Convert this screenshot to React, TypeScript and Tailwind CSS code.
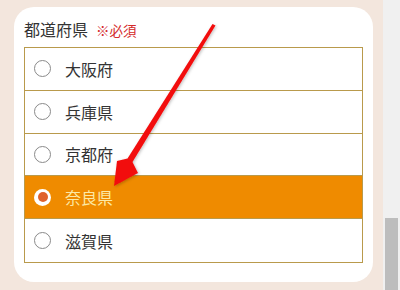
import React from "react";

const items = ["大阪府", "兵庫県", "京都府", "奈良県", "滋賀県"];
const selected = 3;

export default function App() {
  return (
    <div
      className="relative flex w-[400px] h-[290px] overflow-hidden"
      style={{ fontFamily: '"Noto Sans CJK JP", "Noto Sans", sans-serif' }}
    >
      <div className="w-[383px] h-full bg-[#f3e6dd] pt-[7px] pl-[14px]">
        <div className="w-[359px] h-[275px] rounded-[20px] bg-white px-[10px] pt-[12px]">
          <div className="flex items-baseline h-[20px] leading-[20px] mb-[8px]">
            <span className="text-[16px] text-[#333333]">都道府県</span>
            <span className="ml-[8px] text-[13.5px] text-[#d42a2a]">※必須</span>
          </div>
          <div className="border border-[#b99a4c] w-[339px]">
            {items.map((name, i) => {
              const sel = i === selected;
              return (
                <div
                  key={name}
                  className={
                    "flex items-center h-[42.8px] pl-[9px] " +
                    (i < items.length - 1 ? "border-b border-[#b99a4c] " : "") +
                    (sel ? "bg-[#ef8b00]" : "bg-white")
                  }
                >
                  {sel ? (
                    <span className="flex items-center justify-center w-[17px] h-[17px] rounded-full bg-white">
                      <span className="w-[10px] h-[10px] rounded-full bg-[#e0622c]" />
                    </span>
                  ) : (
                    <span className="w-[17px] h-[17px] rounded-full border border-[#8a8a8a] bg-white" />
                  )}
                  <span
                    className={
                      "ml-[14px] text-[16px] leading-[20px] " +
                      (sel ? "text-[#fce9a6]" : "text-[#333333]")
                    }
                  >
                    {name}
                  </span>
                </div>
              );
            })}
          </div>
        </div>
      </div>
      <div className="flex flex-col w-[17px] h-full bg-[#f0f0f0]">
        <div className="h-[218px]" />
        <div className="ml-[2px] w-[13px] flex-1 bg-[#bdbdbd]" />
      </div>
      <svg
        className="absolute left-0 top-0 pointer-events-none"
        width="400"
        height="290"
        viewBox="0 0 400 290"
      >
        <defs>
          <filter id="sh" x="-20%" y="-20%" width="140%" height="140%">
            <feDropShadow dx="1" dy="1" stdDeviation="1.5" floodColor="#000" floodOpacity="0.25" />
          </filter>
        </defs>
        <polygon
          filter="url(#sh)"
          fill="#f20d0d"
          points="212.5,24 215.5,25.5 132.5,162 138,173 114,186 117,161 127.5,158.5"
        />
      </svg>
    </div>
  );
}
